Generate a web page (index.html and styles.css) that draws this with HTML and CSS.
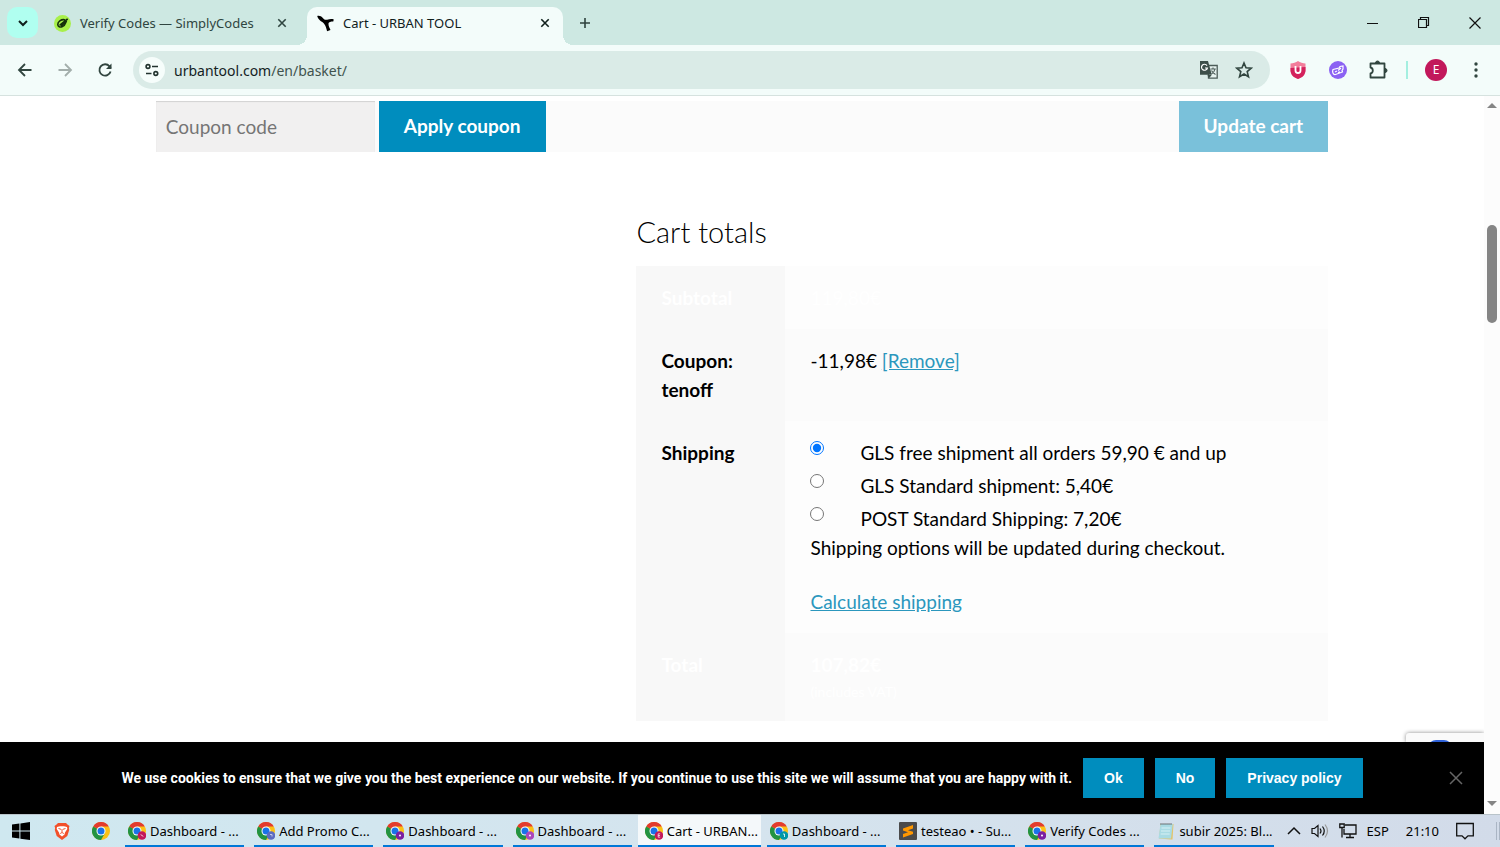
FILE: index.html
```html
<!DOCTYPE html>
<html lang="en">
  <head>
    <meta charset="UTF-8" />
    <meta name="viewport" content="width=device-width, initial-scale=1.0" />
    <title>Cart - URBAN TOOL</title>
    <link rel="stylesheet" href="styles.css">
  </head>
  <body>
    <svg class="sprite" aria-hidden="true">
      <symbol id="chrome" viewBox="0 0 18 18">
        <circle cx="9" cy="9" r="9" fill="#fbc116" />
        <path d="M9 9L1.2 4.5A9 9 0 0 1 16.8 4.5H9z" fill="#e33b2e" />
        <path d="M1.2 4.5A9 9 0 0 0 9 18L12.9 11.2 9 9z" fill="#229342" />
        <circle cx="9" cy="9" r="4.5" fill="#fff" />
        <circle cx="9" cy="9" r="3.5" fill="#1a73e8" />
      </symbol>
      <symbol id="close" viewBox="0 0 16 16">
        <path d="M4.3 4.3l7.4 7.4M11.7 4.3l-7.4 7.4" fill="none" stroke="currentColor" stroke-width="1.6" />
      </symbol>
      <symbol id="leaf" viewBox="0 0 18 18">
        <path d="M11 5C7.500 4.600 4 7 4 10c0 2.500 2.500 3.200 4.500 2.500C11 11.700 12 9.500 12.500 8M6.500 10.500L14 4.500M8 11l5-4" fill="none" stroke="currentColor" stroke-width="1.700" stroke-linecap="round" />
      </symbol>
    </svg>

    <header class="browser">
      <div class="tab-strip">
        <button class="tab-search" aria-label="Search tabs">
          <svg width="12" height="12" viewBox="0 0 12 12"><path d="M2 4l4 4 4-4" fill="none" stroke="#10201c" stroke-width="2" /></svg>
        </button>
        <div class="tab">
          <svg class="favicon" viewBox="0 0 18 18" color="#15300a"><circle cx="9" cy="9" r="9" fill="#a8f04a" /><use href="#leaf" /></svg>
          <span class="tab-title">Verify Codes — SimplyCodes</span>
          <button class="tab-close" aria-label="Close tab"><svg width="16" height="16"><use href="#close" /></svg></button>
        </div>
        <div class="tab active">
          <svg class="favicon" viewBox="0 0 16 16"><path d="M.2 1C1 .2 4 .5 5.500 2.800 6.500 4.300 8 4.800 9.500 4.500 11.500 4 13.500 3.200 15.800 4.200L15.300 6C13 6 11 6.500 10.800 8c-.2 2 1.200 4.500 1.900 6L9.500 15.200C8.700 12.500 8.300 10 6.500 8 5 6.300 1.200 5 .2 1z" /></svg>
          <span class="tab-title">Cart - URBAN TOOL</span>
          <button class="tab-close" aria-label="Close tab"><svg width="16" height="16"><use href="#close" /></svg></button>
        </div>
        <button class="new-tab" aria-label="New tab">
          <svg width="14" height="14" viewBox="0 0 14 14"><path d="M7 2v10M2 7h10" stroke="#2f423e" stroke-width="1.600" /></svg>
        </button>
        <div class="window-buttons">
          <button aria-label="Minimize"><svg width="12" height="12" viewBox="0 0 12 12"><path d="M0 6.500h11" stroke="#111" /></svg></button>
          <button aria-label="Restore"><svg width="12" height="12" viewBox="0 0 12 12"><path d="M.5 2.500h8v8h-8zM2.500 2.500v-2h8v8h-2" fill="none" stroke="#111" stroke-width="1.200" /></svg></button>
          <button aria-label="Close"><svg width="12" height="12" viewBox="0 0 12 12"><path d="M.5.5l11 11M11.500.5l-11 11" stroke="#111" stroke-width="1.200" /></svg></button>
        </div>
      </div>

      <div class="toolbar">
        <button class="tool" aria-label="Back"><svg width="16" height="16" viewBox="0 0 16 16"><path d="M14.500 8H2.500M8 2L2 8l6 6" fill="none" stroke="#31453f" stroke-width="1.800" /></svg></button>
        <button class="tool" aria-label="Forward"><svg width="16" height="16" viewBox="0 0 16 16"><path d="M1.500 8h12M8 2l6 6-6 6" fill="none" stroke="#a3aeab" stroke-width="1.800" /></svg></button>
        <button class="tool" aria-label="Reload"><svg width="16" height="16" viewBox="0 0 16 16"><path d="M13.600 9.500A5.700 5.700 0 1 1 12.500 4.300L13.800 6" fill="none" stroke="#31453f" stroke-width="1.800" /><path d="M14.500 1.500v5.500H9z" fill="#31453f" /></svg></button>
        <div class="omnibox">
          <button class="site-info" aria-label="Site information"><svg width="16" height="16" viewBox="0 0 16 16"><g fill="none" stroke="#22332f" stroke-width="1.600"><circle cx="4" cy="4.500" r="1.900" /><path d="M8 4.500h6M2 11.500h5.500" /><circle cx="11.800" cy="11.500" r="1.900" /></g></svg></button>
          <div class="url">urbantool.com<span>/en/basket/</span></div>
          <button class="omni-icon" aria-label="Translate"><svg width="20" height="20" viewBox="0 0 20 20"><path d="M9 5.500h9.200V18.200H9.500z" fill="#e7f3f0" stroke="#4c5c58" stroke-width="1.300" /><path d="M1 1h8l3.800 13.800H1z" fill="#3d4f4a" /><path d="M8 5.600A3 3 0 1 0 8.400 8H6" fill="none" stroke="#fff" stroke-width="1.200" /><path d="M11.500 9h5.300M14 7.500V9M16 9c-.5 2.500-2 4-3.500 5M12.500 10.500c1 2 2.500 3.300 4 4" fill="none" stroke="#4c5c58" stroke-width="1.100" /><path d="M8.500 15h4.200l-2.500 3z" fill="#3d4f4a" /></svg></button>
          <button class="omni-icon" aria-label="Bookmark"><svg width="18" height="18" viewBox="0 0 18 18"><path d="M9 2l2 4.800 5.200.4-4 3.400 1.300 5.100L9 13l-4.500 2.700 1.300-5.100-4-3.400L7 6.800z" fill="none" stroke="#31453f" stroke-width="1.600" /></svg></button>
        </div>
        <button class="tool" aria-label="Ad blocker"><svg width="18" height="18" viewBox="0 0 18 18"><path d="M9 0C7 1.500 4 2.500 1.500 2.500V9c0 4.500 3 7.500 7.500 9 4.500-1.500 7.500-4.500 7.500-9V2.500C14 2.500 11 1.500 9 0z" fill="#f27d9b" /><path d="M1.500 7v2c0 4.500 3 7.500 7.500 9 4.500-1.500 7.500-4.500 7.500-9V6z" fill="#d3225c" /><path d="M6.500 5v4.500a2.500 2.500 0 0 0 5 0V5" fill="none" stroke="#fff" stroke-width="1.800" /></svg></button>
        <button class="tool" aria-label="Coupon finder"><svg width="18" height="18" viewBox="0 0 18 18"><circle cx="9" cy="9" r="9" fill="#8b62f3" /><path d="M4 8.500L10 7l1-1.500L14 5v3l-1 1.500.5 1.500-7 2.500C4 14 3 10.500 4 8.500zM6 11l2-1M9 9.500l3-2.500M9 11.500l2-.8" fill="none" stroke="#fff" stroke-width="1.200" /></svg></button>
        <button class="tool" aria-label="Extensions"><svg width="20" height="20" viewBox="0 0 20 20"><path d="M2.500 3.500h14v14h-14v-4c1.500-.3 2.300-1.500 2.300-3s-.8-2.700-2.300-3z" fill="none" stroke="#31453f" stroke-width="1.800" stroke-linejoin="round" /><path d="M7.500 3a2 2 0 0 1 4 0zM17 8.500a2 2 0 0 1 0 4z" fill="#31453f" stroke="#31453f" /></svg></button>
        <span class="divider"></span>
        <button class="tool" aria-label="Profile"><span class="avatar">E</span></button>
        <button class="tool" aria-label="Menu"><svg width="4" height="16" viewBox="0 0 4 16" fill="#31453f"><circle cx="2" cy="2" r="1.700" /><circle cx="2" cy="8" r="1.700" /><circle cx="2" cy="14" r="1.700" /></svg></button>
      </div>
    </header>

    <div class="viewport">
      <div class="page">
        <main class="content">
          <div class="container">
            <form class="cart-actions">
              <input type="text" class="coupon-input" placeholder="Coupon code" aria-label="Coupon code" />
              <button type="button" class="button">Apply coupon</button>
              <button type="button" class="button update" disabled>Update cart</button>
            </form>

            <section class="cart-totals">
              <h2>Cart totals</h2>
              <table>
                <tr class="faded">
                  <th>Subtotal</th>
                  <td>119,80€</td>
                </tr>
                <tr class="alt">
                  <th>Coupon: tenoff</th>
                  <td>-11,98€ <a href="#">[Remove]</a></td>
                </tr>
                <tr>
                  <th>Shipping</th>
                  <td>
                    <ul class="shipping-methods">
                      <li><input type="radio" name="shipping" id="gls-free" checked /><label for="gls-free">GLS free shipment all orders 59,90 € and up</label></li>
                      <li><input type="radio" name="shipping" id="gls" /><label for="gls">GLS Standard shipment: 5,40€</label></li>
                      <li><input type="radio" name="shipping" id="post" /><label for="post">POST Standard Shipping: 7,20€</label></li>
                    </ul>
                    <p>Shipping options will be updated during checkout.</p>
                    <p class="calculator"><a href="#">Calculate shipping</a></p>
                  </td>
                </tr>
                <tr class="alt faded">
                  <th>Total</th>
                  <td><strong>107,82€</strong><small>(includes VAT)</small></td>
                </tr>
              </table>
            </section>
          </div>
          <div class="captcha-badge"><span></span></div>
        </main>

        <div class="cookie-notice">
          <span>We use cookies to ensure that we give you the best experience on our website. If you continue to use this site we will assume that you are happy with it.</span>
          <button>Ok</button>
          <button>No</button>
          <button>Privacy policy</button>
          <button class="cookie-close" aria-label="Close"><svg width="14" height="14" viewBox="0 0 14 14"><path d="M1 1l12 12M13 1L1 13" stroke="#666" stroke-width="1.500" /></svg></button>
        </div>
      </div>

      <div class="scrollbar">
        <svg width="10" height="5" viewBox="0 0 10 5"><path d="M0 5l5-5 5 5z" fill="#858585" /></svg>
        <div class="track"><div class="thumb"></div></div>
        <svg width="10" height="5" viewBox="0 0 10 5"><path d="M0 0l5 5 5-5z" fill="#858585" /></svg>
      </div>
    </div>

    <footer class="taskbar">
      <button class="start" aria-label="Start"><svg width="18" height="18" viewBox="0 0 18 18"><path d="M0 2.600L7.400 1.600V8.500H0zM8.400 1.400L18 0v8.500H8.400zM0 9.500h7.400v7L0 15.500zM8.400 9.500H18V18l-9.600-1.300z" /></svg></button>
      <button class="pinned" aria-label="Brave"><svg width="16" height="18" viewBox="0 0 16 18"><path d="M4 1h8l1.500 1.500L15.500 4l-.6 2 .3 2-1.900 6L8 18l-5.300-4L.8 8l.3-2-.6-2 2-1.500z" fill="#f2502a" /><path d="M3 5l3-.8h4L13 5l.3 2L11 10.500l-.5 2L8 14.500 5.500 12.500 5 10.500 2.700 7z" fill="#fff" /><path d="M4.500 6.500l2.500.8M11.500 6.500L9 7.300M8 7v3M6.200 11.500L8 10.500l1.800 1" fill="none" stroke="#f2502a" /></svg></button>
      <button class="pinned" aria-label="Chrome"><svg width="18" height="18"><use href="#chrome" /></svg></button>
      <div class="tasks">
        <button class="task"><svg viewBox="0 0 18 18"><use href="#chrome" /><circle cx="14" cy="13.500" r="4.300" fill="#c2185b" /><path d="M13 12.500l2 2" stroke="#fff" /></svg>Dashboard - ...</button>
        <button class="task"><svg viewBox="0 0 18 18"><use href="#chrome" /><circle cx="14" cy="13.500" r="4.300" fill="#5c6bc0" /><path d="M13 12.500h2v2" fill="none" stroke="#c5cae9" /></svg>Add Promo C...</button>
        <button class="task"><svg viewBox="0 0 18 18"><use href="#chrome" /><circle cx="14" cy="13.500" r="4.300" fill="#7b1fa2" /><circle cx="14" cy="13.500" r="1" fill="#fff" /></svg>Dashboard - ...</button>
        <button class="task"><svg viewBox="0 0 18 18"><use href="#chrome" /><circle cx="14" cy="13.500" r="4.300" fill="#ab47bc" /><circle cx="14" cy="13.500" r="1" fill="#fff" /></svg>Dashboard - ...</button>
        <button class="task current"><svg viewBox="0 0 18 18"><use href="#chrome" /><circle cx="14" cy="13.500" r="4.300" fill="#c2185b" /><path d="M15.200 11.800h-2v3.400h2M13.200 13.500h1.800" fill="none" stroke="#fff" stroke-width=".7" /></svg>Cart - URBAN...</button>
        <button class="task"><svg viewBox="0 0 18 18"><use href="#chrome" /><circle cx="14" cy="13.500" r="4.300" fill="#0097a7" /><path d="M13 12h1.500v3" fill="none" stroke="#fff" stroke-width=".8" /></svg>Dashboard - ...</button>
        <button class="task"><svg viewBox="0 0 18 18"><rect width="18" height="18" rx="1" fill="#4b4b4b" /><path d="M4 6.500L14 3v3.500L9 8.200l5 1.600V12L4 15.500V12l5-1.800-5-1.600z" fill="#ff9800" /></svg>testeao • - Su...</button>
        <button class="task"><svg viewBox="0 0 18 18"><use href="#chrome" /><circle cx="14" cy="13.500" r="4.300" fill="#7b1fa2" /><circle cx="14" cy="13.500" r="1" fill="#fff" /></svg>Verify Codes ...</button>
        <button class="task"><svg viewBox="0 0 18 18"><path d="M3.500 2h13l-1 15.500H14L2 16.500z" fill="#e3c46b" /><path d="M3.500 2h12.300L14 16.500H1.500z" fill="#a9dbe4" /><path d="M4 1v2M6 1v2M8 1v2M10 1v2M12 1v2M14 1v2" stroke="#555" stroke-width=".8" /><path d="M4.500 6h9M4 9h9M3.700 12h9" stroke="#d7f0f4" /></svg>subir 2025: Bl...</button>
      </div>
      <div class="tray">
        <svg width="14" height="14" viewBox="0 0 14 14"><path d="M1 10l6-6 6 6" fill="none" stroke="#111" stroke-width="1.500" /></svg>
        <svg width="18" height="16" viewBox="0 0 18 16"><path d="M1 5.500h2.500L7 2.500v11L3.500 10.500H1z" fill="none" stroke="#111" stroke-width="1.200" /><path d="M9 5.500q2 2.500 0 5M11.500 3.500q3.500 4.500 0 9" fill="none" stroke="#111" stroke-width="1.200" /><path d="M14 1.500q5 6.500 0 13" fill="none" stroke="#999" stroke-width="1.200" /></svg>
        <svg width="18" height="16" viewBox="0 0 18 16"><path d="M6 2h11v9H5V6M11 11v3.500M7 14.500h8M.8 1h4.400v3.500H.8zM3 4.500v10" fill="none" stroke="#111" stroke-width="1.300" /></svg>
        <span>ESP</span>
        <span class="clock">21:10</span>
        <svg width="18" height="18" viewBox="0 0 18 18"><path d="M.7 1.500h16.600v12.300H12L9 16.800l-3-3H.7z" fill="none" stroke="#111" stroke-width="1.300" /></svg>
      </div>
    </footer>
  </body>
</html>
```

FILE: styles.css
```css
* {
  box-sizing: border-box;
}
body {
  margin: 0;
  height: 100vh;
  display: flex;
  flex-direction: column;
  overflow: hidden;
  background: #fff;
  color: #000;
  font-family: "Noto Sans", "Open Sans", sans-serif;
  font-size: 13px;
}
button {
  border: 0;
  padding: 0;
  background: none;
  color: inherit;
  font: inherit;
}
svg {
  display: block;
  flex: none;
}
.sprite {
  position: absolute;
  width: 0;
  height: 0;
}

/* browser chrome */
.tab-strip {
  display: flex;
  align-items: flex-end;
  height: 45px;
  padding-left: 7px;
  background: #cde8e2;
}
.tab-search {
  display: flex;
  align-items: center;
  justify-content: center;
  width: 31px;
  height: 31px;
  margin: 0 6px 7px 0;
  border-radius: 10px;
  background: #b0fff0;
}
.tab {
  display: flex;
  align-items: center;
  width: 256px;
  height: 38px;
  padding: 0 10px 6px;
  margin-right: 7px;
  color: #2f4540;
}
.tab.active {
  position: relative;
  border-radius: 10px 10px 0 0;
  background: #f3fcfa;
  color: #10201c;
}
.tab.active::before,
.tab.active::after {
  content: "";
  position: absolute;
  bottom: 0;
  width: 10px;
  height: 10px;
}
.tab.active::before {
  right: 100%;
  background: radial-gradient(circle at 0 0, transparent 10px, #f3fcfa 10px);
}
.tab.active::after {
  left: 100%;
  background: radial-gradient(circle at 100% 0, transparent 10px, #f3fcfa 10px);
}
.favicon {
  width: 17px;
  height: 17px;
}
.tab-title {
  flex: 1;
  margin-left: 9px;
  white-space: nowrap;
}
.new-tab {
  padding: 0 8px;
  align-self: center;
}
.window-buttons {
  display: flex;
  align-self: stretch;
  margin-left: auto;
}
.window-buttons button {
  display: flex;
  align-items: center;
  justify-content: center;
  width: 51px;
}
.toolbar {
  display: flex;
  align-items: center;
  height: 51px;
  padding: 0 4px 0 5px;
  border-bottom: 1px solid #d6e2df;
  background: #f3fcfa;
}
.tool {
  display: flex;
  align-items: center;
  justify-content: center;
  width: 40px;
  height: 38px;
}
.omnibox {
  display: flex;
  flex: 1;
  align-items: center;
  height: 38px;
  margin: 0 8px;
  padding: 0 17px 0 6px;
  border-radius: 19px;
  background: #daebe7;
}
.site-info {
  display: flex;
  align-items: center;
  justify-content: center;
  width: 26px;
  height: 26px;
  border-radius: 50%;
  background: #f6fdfb;
}
.url {
  flex: 1;
  margin-left: 9px;
  font-size: 14px;
  color: #14221f;
}
.url span {
  color: #41534e;
}
.omni-icon {
  margin-left: 16px;
}
.divider {
  width: 2px;
  height: 18px;
  margin: 0 8px;
  background: #a4efe0;
}
.avatar {
  width: 22px;
  height: 22px;
  border-radius: 50%;
  background: #c2185b;
  color: #fff;
  font-size: 12px;
  line-height: 22px;
}

/* page */
.viewport {
  display: flex;
  flex: 1;
  min-height: 0;
}
.page {
  display: flex;
  flex: 1;
  flex-direction: column;
  min-width: 0;
}
.content {
  position: relative;
  flex: 1;
  min-height: 0;
  overflow: hidden;
  font-family: Lato, sans-serif;
  font-size: 19px;
  line-height: 29px;
}
.container {
  width: 79%;
  margin: 0 auto;
  padding-top: 5px;
}
.cart-actions {
  display: flex;
  gap: 4px;
  height: 51px;
  background: #fbfbfb;
}
.coupon-input {
  width: 219px;
  padding: 0 10px;
  border: 0;
  background: #f1f0f0;
  box-shadow: inset 0 1px 1px #d2d2d2;
  color: #777;
  font: inherit;
}
.button {
  padding: 0 25px 2px;
  background: #008dbe;
  color: #fff;
  font-weight: bold;
}
.button.update {
  margin-left: auto;
  background: #7ac1da;
}
.cart-totals {
  width: 59%;
  margin: 62px 0 0 auto;
}
h2 {
  margin: 0 0 17px;
  font-size: 29px;
  font-weight: 300;
  line-height: 35px;
}
table {
  width: 100%;
  border-collapse: collapse;
  table-layout: fixed;
}
th,
td {
  padding: 17px 25px;
  text-align: left;
  vertical-align: top;
  background: #fdfdfd;
}
th {
  width: 149px;
  background: #f8f8f8;
}
.alt td {
  background: #fbfbfb;
}
.faded {
  color: #fff;
}
small {
  display: block;
  font-size: 14px;
  line-height: 25px;
}
a {
  color: #2b97bd;
}
p {
  margin: 0;
}
.shipping-methods {
  margin: 0;
  padding: 0;
  list-style: none;
}
.shipping-methods li {
  display: flex;
  align-items: flex-start;
  gap: 36px;
  margin-bottom: 4px;
}
.shipping-methods li:last-child {
  margin-bottom: 0;
}
.shipping-methods input {
  width: 14px;
  height: 14px;
  margin: 3px 0 0;
}
.calculator {
  margin-top: 25px;
}
.captcha-badge {
  position: absolute;
  right: 0;
  bottom: 0;
  width: 78px;
  height: 9px;
  padding-left: 22px;
  overflow: hidden;
  border-radius: 3px 0 0 0;
  background: #fafafa;
  box-shadow: 0 0 4px #888;
}
.captcha-badge span {
  display: block;
  width: 24px;
  height: 24px;
  margin-top: 7px;
  border-radius: 8px;
  background: #2f62d8;
}
.cookie-notice {
  position: relative;
  display: flex;
  align-items: center;
  justify-content: center;
  gap: 11px;
  height: 72px;
  background: #000;
  color: #fff;
  font-family: Roboto, sans-serif;
  font-size: 14px;
  font-weight: 700;
}
.cookie-notice button {
  height: 40px;
  padding: 0 21px;
  background: #008dbe;
  font-family: "Liberation Sans", sans-serif;
  font-weight: bold;
}
.cookie-notice .cookie-close {
  position: absolute;
  right: 0;
  background: none;
}

.scrollbar {
  display: flex;
  flex-direction: column;
  align-items: center;
  width: 16px;
  padding: 7px 0 8px;
  background: #fcfcfc;
}
.track {
  flex: 1;
  padding-top: 117px;
}
.thumb {
  width: 10px;
  height: 98px;
  border-radius: 5px;
  background: #858585;
}

/* windows taskbar */
.taskbar {
  display: flex;
  align-items: center;
  height: 33px;
  border-top: 1px solid #b9c4ca;
  background: linear-gradient(90deg, #cfe8f0, #d5e4ee 50%, #d2dbe9);
}
.start,
.pinned {
  display: flex;
  align-items: center;
  justify-content: center;
  width: 39px;
}
.start {
  width: 42px;
}
.tasks {
  display: flex;
  flex: 1;
  align-self: stretch;
}
.task {
  display: flex;
  flex: 1;
  align-items: center;
  gap: 4px;
  margin: 0 5px;
  padding: 2px 0 0 3px;
  border-bottom: 2px solid #0078d7;
  white-space: nowrap;
}
.task.current {
  margin: 0 1px;
  padding-left: 7px;
  background: #f4f8fa;
}
.task svg {
  width: 18px;
  height: 18px;
}
.tray {
  display: flex;
  align-items: center;
  gap: 10px;
  padding: 0 22px 0 8px;
  border-right: 4px double #aab5c4;
}
.clock {
  margin: 0 7px;
}
```
